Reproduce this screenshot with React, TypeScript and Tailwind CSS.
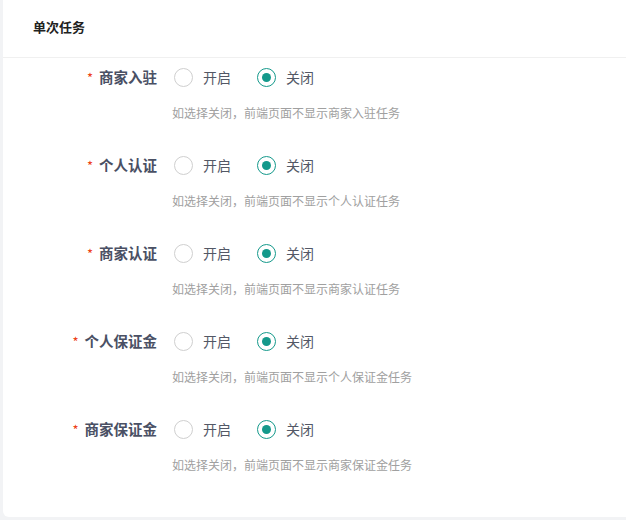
const tasks = [
  { label: "商家入驻" },
  { label: "个人认证" },
  { label: "商家认证" },
  { label: "个人保证金" },
  { label: "商家保证金" },
];

function Radio({ checked, text }: { checked: boolean; text: string }) {
  return (
    <label className="flex items-center cursor-pointer">
      <span
        className={
          checked
            ? "flex h-[19px] w-[19px] items-center justify-center rounded-full border-[1.5px] border-[#14998b] bg-white"
            : "flex h-[19px] w-[19px] items-center justify-center rounded-full border-[1.5px] border-[#cfcfcf] bg-white"
        }
      >
        {checked && <span className="h-[9px] w-[9px] rounded-full bg-[#14998b]" />}
      </span>
      <span className="ml-[10px] text-[14px] text-[#535866]">{text}</span>
    </label>
  );
}

export default function App() {
  return (
    <div
      className="h-[520px] w-[626px] bg-[#f2f3f5] pl-[3px] pb-[3px]"
      style={{ fontFamily: '"Noto Sans CJK SC", "Noto Sans", sans-serif' }}
    >
      <div className="h-[517px] rounded-bl-[6px] bg-white">
        <div className="flex h-[58px] items-center border-b border-[#f0f0f0] pl-[30px] pb-[4px]">
          <span className="text-[13px] font-bold text-[#222]">单次任务</span>
        </div>
        <div className="pt-[9px]">
          {tasks.map((t) => (
            <div key={t.label} className="mb-[32px] flex">
              <div className="flex h-[20px] w-[169px] items-center justify-end pr-[15px]">
                <span className="mr-[6px] text-[13px] leading-none text-[#ed4014]">*</span>
                <span className="text-[14.5px] font-bold text-[#4a5064]">{t.label}</span>
              </div>
              <div className="flex flex-col">
                <div className="flex h-[20px] items-center gap-[26px] pl-[2px]">
                  <Radio checked={false} text="开启" />
                  <Radio checked={true} text="关闭" />
                </div>
                <div className="mt-[16px] flex h-[20px] items-center text-[12px] text-[#a0a0a0]">
                  如选择关闭，前端页面不显示{t.label}任务
                </div>
              </div>
            </div>
          ))}
        </div>
      </div>
    </div>
  );
}
